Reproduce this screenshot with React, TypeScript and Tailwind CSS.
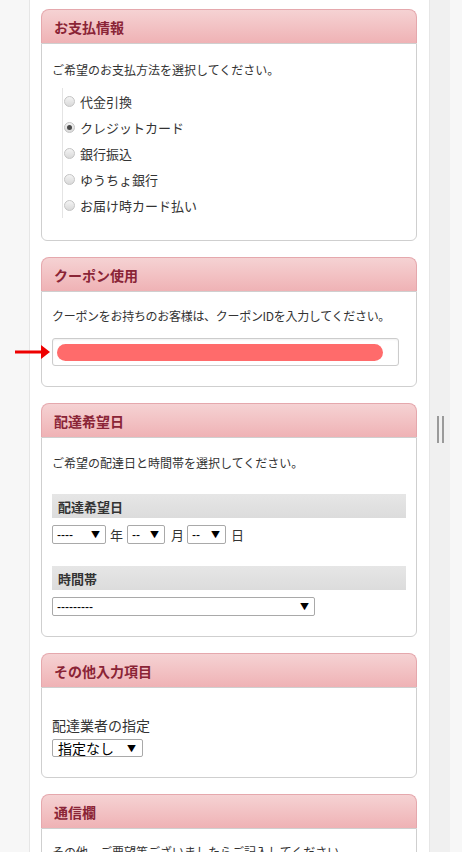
import React from "react";

const jp = { fontFamily: '"Noto Sans CJK JP", "Noto Sans", sans-serif' };

function Card({ title, children, className = "" }: { title: string; children: React.ReactNode; className?: string }) {
  return (
    <section className={`w-[376px] ${className}`}>
      <div className="h-[34px] rounded-t-[8px] border border-b-0 border-[#e5a8ad] bg-gradient-to-b from-[#f5d2d3] to-[#efb2b5] flex items-center pl-[12px] border-b-[#cfcfcf]">
        <h2 className="text-[14px] font-bold text-[#8a2436] leading-none">{title}</h2>
      </div>
      <div className="rounded-b-[6px] border border-[#cfcfcf] bg-white px-[10px]">{children}</div>
    </section>
  );
}

function Radio({ checked }: { checked?: boolean }) {
  return (
    <span className="w-[11px] h-[11px] rounded-full border border-[#c4c4c4] bg-gradient-to-b from-[#f4f4f4] to-[#d9d9d9] flex items-center justify-center">
      {checked && <span className="w-[5px] h-[5px] rounded-full bg-[#4a4a4a]" />}
    </span>
  );
}

function FakeSelect({ label, width }: { label: string; width: string }) {
  return (
    <div className={`${width} h-[19px] border border-[#a9a9a9] rounded-[2px] bg-white flex items-center justify-between pl-[4px] pr-[5px]`}>
      <span className="text-[12px] leading-none text-black" style={{ fontFamily: '"Liberation Sans", sans-serif' }}>{label}</span>
      <span className="text-[9px] leading-none text-black">▼</span>
    </div>
  );
}

const payments = ["代金引換", "クレジットカード", "銀行振込", "ゆうちょ銀行", "お届け時カード払い"];

export default function App() {
  return (
    <div className="relative flex h-[852px] w-[462px] overflow-hidden bg-[#f7f7f7]" style={jp}>
      <div className="w-[29px] shrink-0 bg-[#f7f7f7]" />

      <main className="w-[401px] shrink-0 bg-white border-x border-[#e6e6e6] pt-[9px] px-[11px] flex flex-col gap-[16px]">
        <Card title="お支払情報">
          <div className="pt-[18px] pb-[22px]">
            <p className="text-[12px] leading-[16px] text-[#333]">ご希望のお支払方法を選択してください。</p>
            <ul className="mt-[10px] ml-[10px] border-l border-[#e4e4e4]">
              {payments.map((p, i) => (
                <li key={p} className="h-[26px] flex items-center gap-[5px] pl-[1px]">
                  <Radio checked={i === 1} />
                  <span className="text-[13px] leading-none text-[#333]">{p}</span>
                </li>
              ))}
            </ul>
          </div>
        </Card>

        <Card title="クーポン使用">
          <div className="pt-[16px] pb-[20px]">
            <p className="text-[12px] leading-[16px] text-[#333] tracking-[-0.3px]">クーポンをお持ちのお客様は、クーポンIDを入力してください。</p>
            <div className="mt-[14px] w-[347px] h-[28px] border border-[#cccccc] rounded-[3px] bg-white shadow-[inset_0_1px_2px_rgba(0,0,0,0.06)] flex items-center pl-[4px]">
              <div className="w-[326px] h-[17px] rounded-full bg-[#ff6b6b] blur-[0.5px]" />
            </div>
          </div>
        </Card>

        <Card title="配達希望日">
          <div className="pt-[17px] pb-[20px]">
            <p className="text-[12px] leading-[16px] text-[#333]">ご希望の配達日と時間帯を選択してください。</p>
            <div className="mt-[23px] h-[24px] bg-gradient-to-b from-[#e6e6e6] to-[#dcdcdc] flex items-center pl-[6px]">
              <span className="text-[13px] font-bold text-[#333] leading-none">配達希望日</span>
            </div>
            <div className="mt-[7px] flex items-center text-[13px] text-[#333]">
              <FakeSelect label="----" width="w-[54px]" />
              <span className="leading-none ml-[4px] mr-[4px]">年</span>
              <FakeSelect label="--" width="w-[38px]" />
              <span className="leading-none ml-[6px] mr-[3px]">月</span>
              <FakeSelect label="--" width="w-[39px]" />
              <span className="leading-none ml-[5px]">日</span>
            </div>
            <div className="mt-[22px] h-[24px] bg-gradient-to-b from-[#e6e6e6] to-[#dcdcdc] flex items-center pl-[6px]">
              <span className="text-[13px] font-bold text-[#333] leading-none">時間帯</span>
            </div>
            <div className="mt-[7px]">
              <FakeSelect label="---------" width="w-[263px]" />
            </div>
          </div>
        </Card>

        <Card title="その他入力項目">
          <div className="pt-[29px] pb-[20px]">
            <p className="text-[14px] leading-[17px] text-[#333]">配達業者の指定</p>
            <div className="mt-[5px] w-[91px] h-[18px] border border-[#a9a9a9] rounded-[2px] bg-white flex items-center justify-between pl-[5px] pr-[6px]">
              <span className="text-[14px] leading-none text-black">指定なし</span>
              <span className="text-[9px] leading-none text-black">▼</span>
            </div>
          </div>
        </Card>

        <Card title="通信欄">
          <div className="pt-[15px] pb-[20px]">
            <p className="text-[12px] leading-[16px] text-[#333]">その他、ご要望等ございましたらご記入してください。</p>
          </div>
        </Card>
      </main>

      <div className="w-[20px] shrink-0 bg-[#f0f0f0] flex items-start justify-center pt-[416px]">
        <div className="flex gap-[3px]">
          <span className="w-[2px] h-[27px] bg-[#9a9a9a]" />
          <span className="w-[2px] h-[27px] bg-[#9a9a9a]" />
        </div>
      </div>
      <div className="flex-1 bg-[#f7f7f7]" />

      {/* annotation arrow pointing at the coupon field */}
      <svg className="absolute left-[15px] top-[344px]" width="36" height="16" viewBox="0 0 36 16">
        <rect x="0" y="6.5" width="28" height="3" fill="#ee0000" />
        <polygon points="26,1 35,8 26,15" fill="#ee0000" />
      </svg>
    </div>
  );
}
